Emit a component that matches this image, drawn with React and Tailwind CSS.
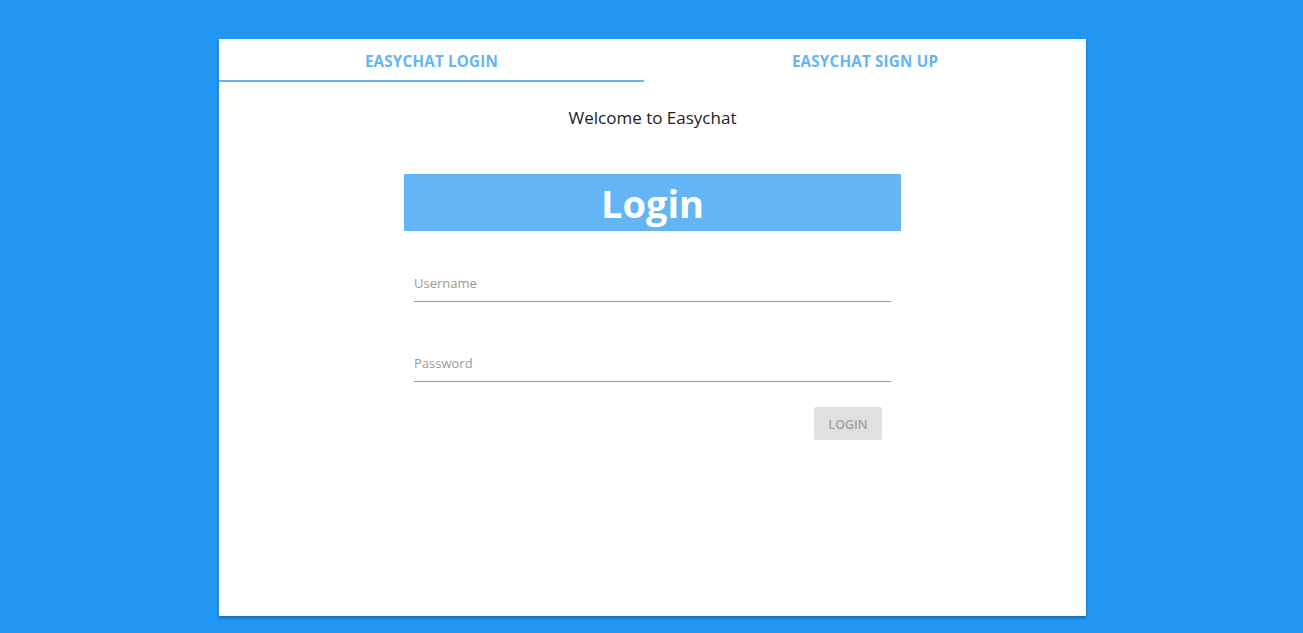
import React, { useState } from "react";

const App = () => {
  const [tab, setTab] = useState(0);
  const [username, setUsername] = useState("");
  const [password, setPassword] = useState("");

  return (
    <div
      className="min-h-screen w-full bg-[#2196f3] pt-[39px] pb-[17px]"
      style={{ fontFamily: '"Open Sans", "Noto Sans", sans-serif' }}
    >
      <div className="ml-[219px] w-[867px] h-[577px] bg-white shadow-[0_2px_3px_rgba(0,0,0,0.3)] flex flex-col">
        {/* Tabs */}
        <div className="flex h-[43px]">
          <button
            onClick={() => setTab(0)}
            className={`w-[425px] pt-[3px] text-[15.2px] font-bold text-[#64b5f6] tracking-[0.2px] border-b-2 ${
              tab === 0 ? "border-[#64b5f6]" : "border-transparent"
            }`}
          >
            EASYCHAT LOGIN
          </button>
          <button
            onClick={() => setTab(1)}
            className={`flex-1 pt-[3px] text-[15.2px] font-bold text-[#64b5f6] tracking-[0.2px] border-b-2 ${
              tab === 1 ? "border-[#64b5f6]" : "border-transparent"
            }`}
          >
            EASYCHAT SIGN UP
          </button>
        </div>

        <p className="text-center text-[17px] text-[#222] mt-[24px] leading-[24px]">
          Welcome to Easychat
        </p>

        <div className="mx-auto w-[497px] mt-[44px]">
          <div className="h-[57px] bg-[#64b5f6] flex items-center justify-center">
            <h1 className="text-white font-bold text-[38px] leading-none">Login</h1>
          </div>

          <div className="px-[10px] mt-[39px]">
            <label className="block">
              <input
                value={username}
                onChange={(e) => setUsername(e.target.value)}
                placeholder="Username"
                className="w-full h-[27px] pb-[9px] border-b border-[#999] text-[13px] text-[#333] placeholder:text-[#999] outline-none"
              />
            </label>
            <label className="block mt-[48px]">
              <input
                type="password"
                value={password}
                onChange={(e) => setPassword(e.target.value)}
                placeholder="Password"
                className="w-full h-[28px] pb-[10px] border-b border-[#999] text-[13px] text-[#333] placeholder:text-[#999] outline-none"
              />
            </label>
            <div className="flex justify-end pr-[9px] mt-[25px]">
              <button
                disabled
                className="w-[68px] h-[33px] pt-[3px] bg-[#e0e0e0] text-[#a0a0a0] text-[12.5px] font-semibold rounded-[2px]"
              >
                LOGIN
              </button>
            </div>
          </div>
        </div>
      </div>
    </div>
  );
};

export default App;
